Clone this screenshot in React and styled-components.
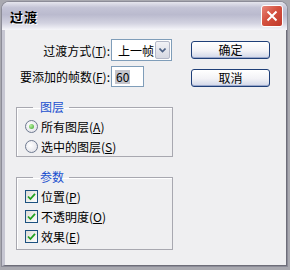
import React from "react";
import styled, { createGlobalStyle } from "styled-components";

const Global = createGlobalStyle`
  html, body { margin: 0; padding: 0; }
  body {
    width: 290px;
    height: 270px;
    background: #a9a9b0;
    font-family: "Noto Sans CJK SC", "Noto Sans", sans-serif;
    font-size: 12px;
    color: #000;
    overflow: hidden;
  }
`;

const Window = styled.div`
  margin: 2px 0 0 2px;
  width: 285px;
  height: 264px;
  display: flex;
  flex-direction: column;
  border-radius: 7px 7px 0 0;
  overflow: hidden;
  background: #fbfbfd;
  box-shadow: 0 0 0 1px #8c8c98;
`;

const TitleBar = styled.div`
  height: 28px;
  flex: none;
  display: flex;
  align-items: center;
  justify-content: space-between;
  padding: 0 4px 0 8px;
  background: linear-gradient(#e6e6ee 0%, #c4c4d6 20%, #babace 45%, #d2d2e0 75%, #f6f6fa 100%);
`;

const Title = styled.span`
  font-weight: bold;
  font-size: 13px;
  letter-spacing: 1px;
  color: #000;
  text-shadow: 1px 1px 0 #fff;
`;

const CloseButton = styled.div`
  width: 20px;
  height: 20px;
  border: 1px solid #fff;
  border-radius: 3px;
  background: linear-gradient(135deg, #e8867a 0%, #d4503f 45%, #c0392c 100%);
  display: flex;
  align-items: center;
  justify-content: center;
`;

const Frame = styled.div`
  flex: 1;
  display: flex;
  border: 3px solid #c6c6d2;
  border-top: none;
  border-right: 1px solid #6d6d78;
  border-bottom: 1px solid #6d6d78;
  box-shadow: inset -1px -1px 0 #d8d8e0, inset -2px -2px 0 #6d6d78;
`;

const Client = styled.div`
  flex: 1;
  display: grid;
  grid-template-columns: 157px 1fr;
  column-gap: 18px;
  padding: 9px 0 0 11px;
  background: #efeff1;
`;

const Column = styled.div`
  display: flex;
  flex-direction: column;
`;

const Form = styled.div`
  display: grid;
  grid-template-columns: 95px 1fr;
  row-gap: 5px;
  align-items: center;
`;

const Label = styled.span`
  text-align: right;
  white-space: nowrap;
  padding-right: 1px;
  margin-left: -1px;
`;

const U = styled.span`
  text-decoration: underline;
`;

const Select = styled.div`
  width: 61px;
  height: 22px;
  box-sizing: border-box;
  border: 1px solid #7f9db9;
  background: #fff;
  display: flex;
  align-items: center;
  justify-content: space-between;
  padding: 1px;
`;

const SelectText = styled.span`
  padding-left: 5px;
`;

const SelectArrow = styled.div`
  width: 15px;
  height: 18px;
  box-sizing: border-box;
  border: 1px solid #b4b8c8;
  border-radius: 2px;
  background: linear-gradient(#f2f2f6, #d6d8e2);
  display: flex;
  align-items: center;
  justify-content: center;
`;

const Input = styled.div`
  width: 33px;
  height: 21px;
  box-sizing: border-box;
  border: 1px solid #7f9db9;
  background: #fff;
  display: flex;
  align-items: center;
  padding-left: 3px;
`;

const Selected = styled.span`
  background: #c4c4cc;
  padding: 0 1px;
  line-height: 14px;
`;

const Group = styled.fieldset`
  margin: ${(p) => p.$top}px 0 0;
  padding: 2px 0 ${(p) => p.$bottom}px 8px;
  width: 157px;
  box-sizing: border-box;
  border: 1px solid #a8a8b0;
  box-shadow: inset 1px 1px 0 #fff;
  border-radius: 0;
`;

const Legend = styled.legend`
  margin-left: 8px;
  padding: 0 5px 0 7px;
  color: #1a4fcf;
  line-height: 14px;
`;

const Option = styled.div`
  height: 20px;
  display: flex;
  align-items: center;
  gap: 3px;
`;

const Radio = styled.span`
  width: 11px;
  height: 11px;
  border-radius: 50%;
  border: 1px solid #6e7a90;
  background: radial-gradient(circle at 40% 40%, #ffffff, #dcdce4);
  display: flex;
  align-items: center;
  justify-content: center;
`;

const Dot = styled.span`
  width: 5px;
  height: 5px;
  border-radius: 50%;
  background: radial-gradient(circle at 35% 35%, #b8f0a0, #3aa52c);
`;

const Check = styled.span`
  width: 11px;
  height: 11px;
  border: 1px solid #1c5180;
  background: linear-gradient(135deg, #dcdcd6, #fff);
  display: flex;
  align-items: center;
  justify-content: center;
`;

const Buttons = styled.div`
  display: flex;
  flex-direction: column;
  gap: 10px;
  padding-top: 2px;
`;

const Button = styled.div`
  width: 79px;
  height: 18px;
  box-sizing: border-box;
  border: 1px solid #1f3f78;
  border-radius: 3px;
  background: linear-gradient(#ffffff 0%, #f2f2f6 55%, #d0d6e8 100%);
  box-shadow: inset 0 -1px 0 #9aa8cc, inset 0 1px 0 #fff;
  display: flex;
  align-items: center;
  justify-content: center;
  line-height: 14px;
`;

const Arrow = () => (
  <svg width="7" height="5" viewBox="0 0 7 5">
    <path d="M0.5 0.5 L3.5 3.5 L6.5 0.5" fill="none" stroke="#4d6185" strokeWidth="1.6" />
  </svg>
);

const Tick = () => (
  <svg width="9" height="9" viewBox="0 0 9 9">
    <path d="M1 4.5 L3.4 7 L8 1.8" fill="none" stroke="#21a121" strokeWidth="1.8" />
  </svg>
);

const CloseX = () => (
  <svg width="12" height="12" viewBox="0 0 12 12">
    <path d="M1.5 1.5 L10.5 10.5 M10.5 1.5 L1.5 10.5" stroke="#fff" strokeWidth="2" />
  </svg>
);

const layers = [
  { text: "所有图层", key: "A", on: true },
  { text: "选中的图层", key: "S", on: false },
];

const params = [
  { text: "位置", key: "P" },
  { text: "不透明度", key: "O" },
  { text: "效果", key: "E" },
];

export default function App() {
  return (
    <>
      <Global />
      <Window>
        <TitleBar>
          <Title>过渡</Title>
          <CloseButton>
            <CloseX />
          </CloseButton>
        </TitleBar>
        <Frame>
          <Client>
            <Column>
              <Form>
                <Label>
                  过渡方式(<U>T</U>):
                </Label>
                <Select>
                  <SelectText>上一帧</SelectText>
                  <SelectArrow>
                    <Arrow />
                  </SelectArrow>
                </Select>
                <Label>
                  要添加的帧数(<U>F</U>):
                </Label>
                <Input>
                  <Selected>60</Selected>
                </Input>
              </Form>
              <Group $top={13} $bottom={0}>
                <Legend>图层</Legend>
                {layers.map((l) => (
                  <Option key={l.key}>
                    <Radio>{l.on && <Dot />}</Radio>
                    <span>
                      {l.text}(<U>{l.key}</U>)
                    </span>
                  </Option>
                ))}
              </Group>
              <Group $top={13} $bottom={3}>
                <Legend>参数</Legend>
                {params.map((p) => (
                  <Option key={p.key}>
                    <Check>
                      <Tick />
                    </Check>
                    <span>
                      {p.text}(<U>{p.key}</U>)
                    </span>
                  </Option>
                ))}
              </Group>
            </Column>
            <Buttons>
              <Button>确定</Button>
              <Button>取消</Button>
            </Buttons>
          </Client>
        </Frame>
      </Window>
    </>
  );
}
